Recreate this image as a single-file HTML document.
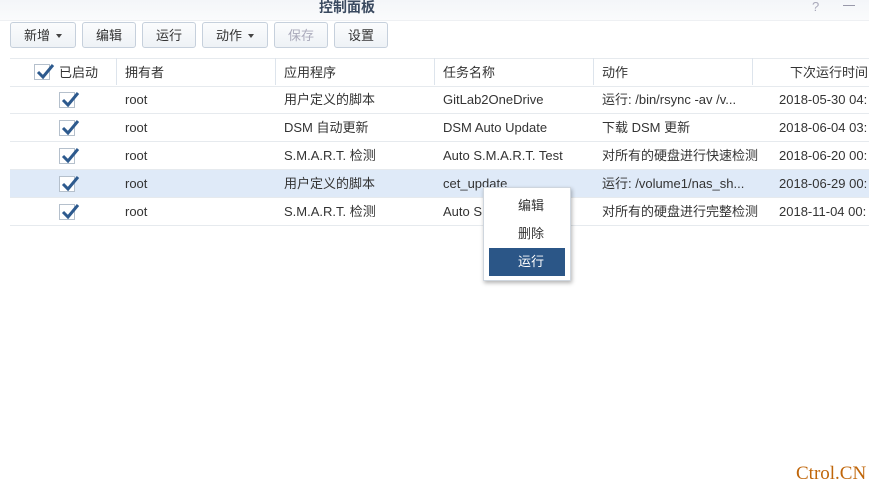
<!DOCTYPE html>
<html><head><meta charset="utf-8"><style>
body{margin:0;width:869px;height:483px;background:#fff;font-family:"Liberation Sans","Noto Sans CJK SC",sans-serif;font-size:13px;color:#333;position:relative;overflow:hidden}
.title{position:absolute;left:0;top:0;width:869px;height:20px;background:linear-gradient(#f4f6f9,#fafbfc);border-bottom:1px solid #eef0f3}
.title span{position:absolute;left:319px;top:-3px;font-size:14px;color:#3a4a60}
.btn{position:absolute;top:22px;height:26px;border:1px solid #c6d0dc;border-radius:3px;background:linear-gradient(#fbfcfd,#eef2f6);font-size:13px;line-height:26px;text-align:center;color:#333;box-sizing:border-box}
.dis{color:#aab}
.caret{display:inline-block;border:3.5px solid transparent;border-top:4px solid #444;margin-left:6px;vertical-align:-1px}
.row{position:absolute;left:10px;width:859px;height:27px;border-bottom:1px solid #e6eaee}
.c{position:absolute;top:0;line-height:28px;white-space:nowrap}
.hd .c{color:#333}
.hdl{position:absolute;top:58px;width:1px;height:27px;background:#dde4ec}
.cb{position:absolute;width:16px;height:16px;border:1px solid #b5c0cc;background:#fff;box-sizing:border-box}
.cb svg{position:absolute;left:0;top:-3px}
.menu{position:absolute;left:483px;top:187px;width:88px;height:94px;background:#fff;border:1px solid #cfd6de;box-shadow:1px 2px 4px rgba(0,0,0,.3);box-sizing:border-box}
.mi{position:absolute;left:5px;width:76px;height:28px;line-height:28px;text-align:center;color:#333;text-indent:8px}
</style></head><body>
<div class="title"><span style="font-weight:bold">控制面板</span><span style="left:812px;color:#aab;font-size:13px;top:-1px">?</span><span style="left:843px;top:5px;width:12px;height:1px;background:#99a;font-size:0"></span></div>
<div class="btn" style="left:10px;width:66px">新增<i class="caret"></i></div>
<div class="btn" style="left:82px;width:54px">编辑</div>
<div class="btn" style="left:142px;width:54px">运行</div>
<div class="btn" style="left:202px;width:66px">动作<i class="caret"></i></div>
<div class="btn dis" style="left:274px;width:54px">保存</div>
<div class="btn" style="left:334px;width:54px">设置</div>

<div class="row hd" style="top:58px;border-top:1px solid #e6eaee">
<div class="cb" style="left:24px;top:5px"><svg width="20" height="20" viewBox="0 0 20 20"><path d="M3 10 L8 15 L18 3" stroke="#2d5a8e" stroke-width="3" fill="none"/></svg></div>
<div class="c" style="left:49px">已启动</div>
<div class="c" style="left:115px">拥有者</div>
<div class="c" style="left:274px">应用程序</div>
<div class="c" style="left:433px">任务名称</div>
<div class="c" style="left:592px">动作</div>
<div class="c" style="left:780px">下次运行时间 ▲</div>
</div>
<div class="hdl" style="left:116px"></div><div class="hdl" style="left:275px"></div><div class="hdl" style="left:434px"></div><div class="hdl" style="left:593px"></div><div class="hdl" style="left:752px"></div>

<div class="row" style="top:86px"><div class="cb" style="left:49px;top:6px"><svg width="20" height="20" viewBox="0 0 20 20"><path d="M3 10 L8 15 L18 3" stroke="#2d5a8e" stroke-width="3" fill="none"/></svg></div><div class="c" style="left:115px">root</div><div class="c" style="left:274px">用户定义的脚本</div><div class="c" style="left:433px">GitLab2OneDrive</div><div class="c" style="left:592px">运行: /bin/rsync -av /v...</div><div class="c" style="left:769px">2018-05-30 04:</div></div>
<div class="row" style="top:114px"><div class="cb" style="left:49px;top:6px"><svg width="20" height="20" viewBox="0 0 20 20"><path d="M3 10 L8 15 L18 3" stroke="#2d5a8e" stroke-width="3" fill="none"/></svg></div><div class="c" style="left:115px">root</div><div class="c" style="left:274px">DSM 自动更新</div><div class="c" style="left:433px">DSM Auto Update</div><div class="c" style="left:592px">下载 DSM 更新</div><div class="c" style="left:769px">2018-06-04 03:</div></div>
<div class="row" style="top:142px"><div class="cb" style="left:49px;top:6px"><svg width="20" height="20" viewBox="0 0 20 20"><path d="M3 10 L8 15 L18 3" stroke="#2d5a8e" stroke-width="3" fill="none"/></svg></div><div class="c" style="left:115px">root</div><div class="c" style="left:274px">S.M.A.R.T. 检测</div><div class="c" style="left:433px">Auto S.M.A.R.T. Test</div><div class="c" style="left:592px">对所有的硬盘进行快速检测</div><div class="c" style="left:769px">2018-06-20 00:</div></div>
<div class="row" style="top:170px;background:#dfeaf8"><div class="cb" style="left:49px;top:6px"><svg width="20" height="20" viewBox="0 0 20 20"><path d="M3 10 L8 15 L18 3" stroke="#2d5a8e" stroke-width="3" fill="none"/></svg></div><div class="c" style="left:115px">root</div><div class="c" style="left:274px">用户定义的脚本</div><div class="c" style="left:433px">cet_update</div><div class="c" style="left:592px">运行: /volume1/nas_sh...</div><div class="c" style="left:769px">2018-06-29 00:</div></div>
<div class="row" style="top:198px"><div class="cb" style="left:49px;top:6px"><svg width="20" height="20" viewBox="0 0 20 20"><path d="M3 10 L8 15 L18 3" stroke="#2d5a8e" stroke-width="3" fill="none"/></svg></div><div class="c" style="left:115px">root</div><div class="c" style="left:274px">S.M.A.R.T. 检测</div><div class="c" style="left:433px">Auto S.M.A.R.T. Test</div><div class="c" style="left:592px">对所有的硬盘进行完整检测</div><div class="c" style="left:769px">2018-11-04 00:</div></div>

<div class="menu">
<div class="mi" style="top:4px">编辑</div>
<div class="mi" style="top:32px">删除</div>
<div class="mi" style="top:60px;background:#2b5687;color:#fff">运行</div>
</div>
<div style="position:absolute;left:796px;top:464px;font-family:'Liberation Serif',serif;font-size:19px;color:#c0660a;line-height:19px">Ctrol.CN</div>
</body></html>
